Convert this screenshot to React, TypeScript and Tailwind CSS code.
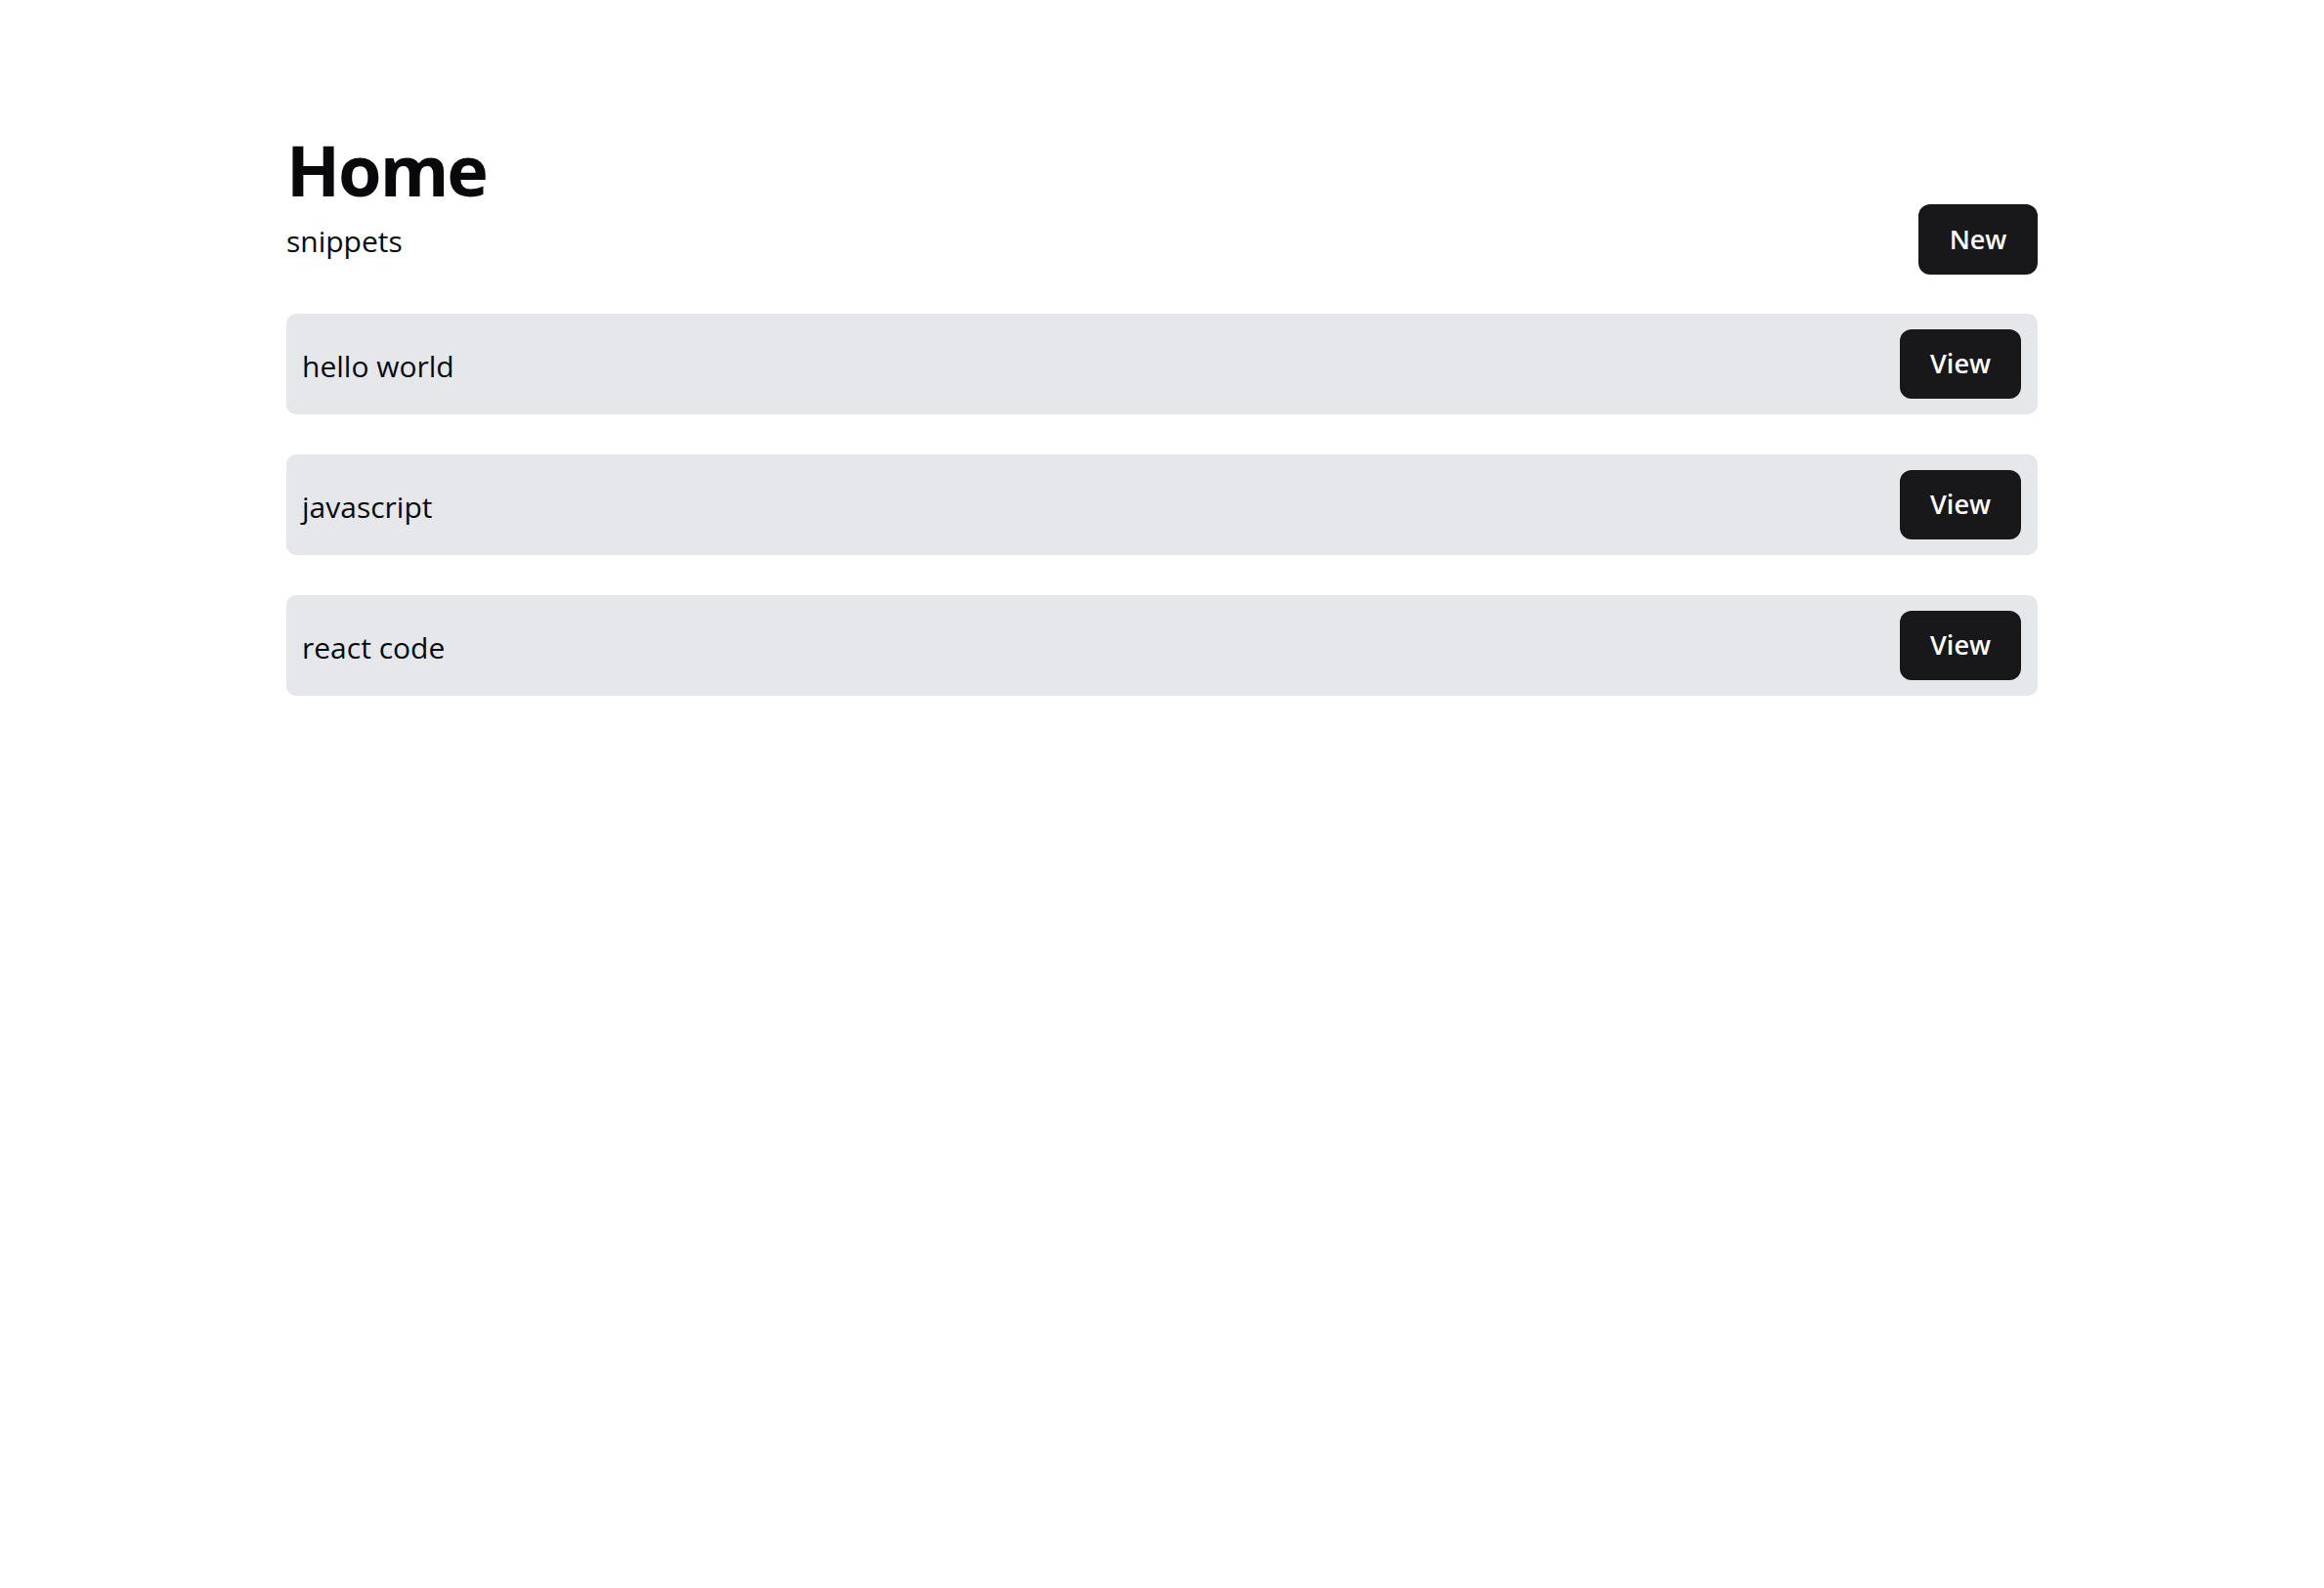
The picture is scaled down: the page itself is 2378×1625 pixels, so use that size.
import React from "react";

const items = ["hello world", "javascript", "react code"];

export default function App() {
  return (
    <div
      className="min-h-screen bg-white text-[#09090b]"
      style={{ fontFamily: '"Open Sans", "Noto Sans", sans-serif' }}
    >
      <div className="mx-auto w-[1792px] pt-[137px]">
        <h1 className="text-[72px] font-bold leading-none tracking-[-2px]">Home</h1>
        <div className="flex items-center justify-between">
          <div className="text-[30px] leading-[45px] pt-[3px]">snippets</div>
          <button className="h-[72px] w-[122px] rounded-[12px] bg-[#18181b] text-[27px] font-semibold text-white">
            New
          </button>
        </div>
        <div className="mt-[40px] flex flex-col gap-[41px]">
          {items.map((t) => (
            <div
              key={t}
              className="flex h-[103px] items-center justify-between rounded-[10px] bg-[#e5e7eb] pl-[16px] pr-[17px]"
            >
              <div className="text-[30px] leading-[45px] pt-[3px]">{t}</div>
              <button className="h-[71px] w-[124px] rounded-[12px] bg-[#18181b] text-[27px] font-semibold text-white">
                View
              </button>
            </div>
          ))}
        </div>
      </div>
    </div>
  );
}
